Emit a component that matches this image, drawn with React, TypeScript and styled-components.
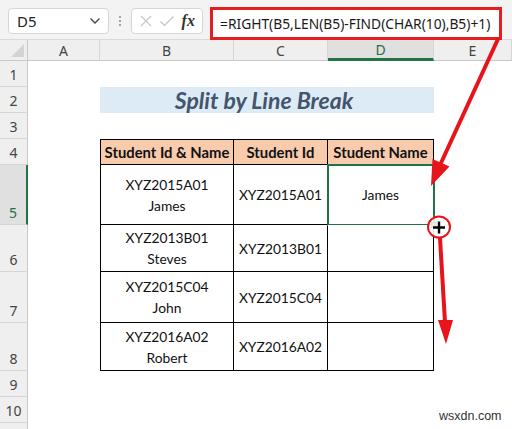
import styled, { createGlobalStyle } from 'styled-components'

const GlobalStyle = createGlobalStyle`
  html, body {
    margin: 0;
    padding: 0;
    background: #ffffff;
  }
  body {
    font-family: 'Noto Sans', 'Liberation Sans', sans-serif;
  }
`

const Page = styled.div`
  position: relative;
  width: 512px;
  height: 429px;
  overflow: hidden;
  background: #ffffff;
`

const Toolbar = styled.div`
  display: flex;
  align-items: flex-start;
  height: 40px;
  box-sizing: border-box;
  padding: 8px 0 0 8px;
  background: #f3f3f3;
  border-bottom: 1px solid #dadada;
`

const NameBox = styled.div`
  width: 101px;
  height: 26px;
  box-sizing: border-box;
  display: flex;
  align-items: center;
  justify-content: space-between;
  padding: 0 7px 0 8px;
  border: 1px solid #d6d6d6;
  border-radius: 4px;
  background: #ffffff;
  font-size: 15px;
  color: #222;
`

const Dots = styled.div`
  width: 22px;
  height: 26px;
  display: flex;
  flex-direction: column;
  align-items: center;
  justify-content: center;
  gap: 2px;
  & > span {
    width: 2px;
    height: 2px;
    border-radius: 50%;
    background: #8a8a8a;
  }
`

const FxBox = styled.div`
  width: 72px;
  height: 26px;
  box-sizing: border-box;
  display: flex;
  align-items: center;
  justify-content: space-around;
  padding: 0 4px;
  border: 1px solid #d6d6d6;
  border-radius: 4px;
  background: #ffffff;
`

const Fx = styled.span`
  font-family: 'Liberation Serif', serif;
  font-style: italic;
  font-weight: bold;
  font-size: 16px;
  color: #333;
`

const FormulaBar = styled.div`
  margin: -1px 0 0 7px;
  width: 292px;
  height: 33px;
  box-sizing: border-box;
  display: flex;
  align-items: center;
  padding-left: 7px;
  border: 3px solid #e41e1e;
  background: #ffffff;
  font-size: 13.8px;
  color: #1a1a1a;
  white-space: nowrap;
  overflow: hidden;
`

const Sheet = styled.div`
  display: grid;
  grid-template-columns: 28px 72px 134px 94px 106px 1fr;
  grid-template-rows: 21px 26px 26px 26px 26px 60px 47px 51px 48px 26px 26px 26px;
`

const Corner = styled.div`
  grid-row: 1;
  grid-column: 1;
  background: #efefef;
  border-right: 1px solid #c8c8c8;
  border-bottom: 1px solid #c8c8c8;
  position: relative;
  &::after {
    content: '';
    position: absolute;
    right: 3px;
    bottom: 3px;
    border-left: 13px solid transparent;
    border-bottom: 13px solid #d4d4d4;
  }
`

const ColHead = styled.div<{ $col: number; $active?: boolean }>`
  grid-row: 1;
  grid-column: ${(p) => p.$col};
  display: flex;
  align-items: center;
  justify-content: center;
  box-sizing: border-box;
  font-size: 14px;
  color: ${(p) => (p.$active ? '#1e7145' : '#444')};
  background: ${(p) => (p.$active ? '#e0e0e0' : '#efefef')};
  border-right: 1px solid #d6d6d6;
  border-bottom: ${(p) => (p.$active ? '3px solid #217346' : '1px solid #c8c8c8')};
`

const RowHead = styled.div<{ $row: number; $active?: boolean }>`
  grid-row: ${(p) => p.$row};
  grid-column: 1;
  display: flex;
  align-items: flex-end;
  justify-content: center;
  box-sizing: border-box;
  padding-bottom: 2px;
  font-size: 14px;
  line-height: 18px;
  color: ${(p) => (p.$active ? '#1e7145' : '#444')};
  background: ${(p) => (p.$active ? '#e0e0e0' : '#efefef')};
  border-bottom: 1px solid #d6d6d6;
  border-right: ${(p) => (p.$active ? '2px solid #217346' : '1px solid #c8c8c8')};
`

const Title = styled.div`
  grid-row: 3;
  grid-column: 3 / 6;
  display: flex;
  align-items: center;
  justify-content: center;
  padding-right: 6px;
  background: #ddebf7;
  font-family: 'Lato', 'Open Sans', sans-serif;
  font-weight: bold;
  font-style: italic;
  font-size: 23px;
  color: #44546a;
`

const Cell = styled.div<{
  $row: number
  $col: number
  $head?: boolean
  $first?: boolean
  $selected?: boolean
}>`
  grid-row: ${(p) => p.$row};
  grid-column: ${(p) => p.$col};
  display: flex;
  align-items: center;
  justify-content: center;
  box-sizing: border-box;
  text-align: center;
  white-space: pre-line;
  font-family: 'Lato', 'Open Sans', sans-serif;
  font-size: ${(p) => (p.$head ? '14.8px' : '13.8px')};
  line-height: 21px;
  font-weight: ${(p) => (p.$head ? 'bold' : 'normal')};
  color: #111;
  background: ${(p) => (p.$head ? '#f8cbad' : '#ffffff')};
  border-right: 1px solid #000;
  border-bottom: 1px solid #000;
  border-left: ${(p) => (p.$first ? '1px solid #000' : 'none')};
  border-top: ${(p) => (p.$head ? '1px solid #000' : 'none')};
  outline: ${(p) => (p.$selected ? '2px solid #217346' : 'none')};
  outline-offset: -1px;
`

const Overlay = styled.svg`
  position: absolute;
  left: 0;
  top: 0;
  width: 512px;
  height: 429px;
  pointer-events: none;
`

const Watermark = styled.div`
  position: absolute;
  left: 439px;
  top: 409px;
  font-family: 'Liberation Sans', Arial, sans-serif;
  font-size: 12.5px;
  color: #333;
`

const columns = ['A', 'B', 'C', 'D', 'E']
const rowNumbers = [1, 2, 3, 4, 5, 6, 7, 8, 9, 10]

const students = [
  { id: 'XYZ2015A01', name: 'James' },
  { id: 'XYZ2013B01', name: 'Steves' },
  { id: 'XYZ2015C04', name: 'John' },
  { id: 'XYZ2016A02', name: 'Robert' },
]

const App: React.FC = () => {
  return (
    <Page>
      <GlobalStyle />
      <Toolbar>
        <NameBox>
          D5
          <svg width='12' height='8' viewBox='0 0 12 8'>
            <path d='M1.5 1.5 L6 6 L10.5 1.5' fill='none' stroke='#444' strokeWidth='1.3' />
          </svg>
        </NameBox>
        <Dots>
          <span />
          <span />
          <span />
        </Dots>
        <FxBox>
          <svg width='14' height='14' viewBox='0 0 14 14'>
            <path d='M2 2 L12 12 M12 2 L2 12' stroke='#c4c4c4' strokeWidth='1.2' />
          </svg>
          <svg width='16' height='14' viewBox='0 0 16 14'>
            <path d='M1.5 7.5 L5.5 11.5 L14.5 2.5' fill='none' stroke='#c4c4c4' strokeWidth='1.2' />
          </svg>
          <Fx>fx</Fx>
        </FxBox>
        <FormulaBar>=RIGHT(B5,LEN(B5)-FIND(CHAR(10),B5)+1)</FormulaBar>
      </Toolbar>

      <Sheet>
        <Corner />
        {columns.map((c, i) => (
          <ColHead key={c} $col={i + 2} $active={c === 'D'}>
            {c}
          </ColHead>
        ))}
        {rowNumbers.map((n) => (
          <RowHead key={n} $row={n + 1} $active={n === 5}>
            {n}
          </RowHead>
        ))}
        <RowHead $row={12} />

        <Title>Split by Line Break</Title>

        <Cell $row={5} $col={3} $head $first>
          Student Id &amp; Name
        </Cell>
        <Cell $row={5} $col={4} $head>
          Student Id
        </Cell>
        <Cell $row={5} $col={5} $head>
          Student Name
        </Cell>

        {students.map((s, i) => (
          <Cell key={`b${s.id}`} $row={i + 6} $col={3} $first>
            {`${s.id}\n${s.name}`}
          </Cell>
        ))}
        {students.map((s, i) => (
          <Cell key={`c${s.id}`} $row={i + 6} $col={4}>
            {s.id}
          </Cell>
        ))}
        {students.map((s, i) => (
          <Cell key={`d${s.id}`} $row={i + 6} $col={5} $selected={i === 0}>
            {i === 0 ? s.name : ''}
          </Cell>
        ))}
      </Sheet>

      <Overlay viewBox='0 0 512 429'>
        <path d='M498 39 L441 163' stroke='#e8141b' strokeWidth='4' strokeLinecap='round' />
        <polygon points='431,186 449.5,166.5 432.5,159' fill='#e8141b' />
        <path d='M440 238 L445 322' stroke='#e8141b' strokeWidth='4' />
        <polygon points='438,320 453,320 446,344' fill='#e8141b' />
        <rect x='431' y='222' width='6' height='6' fill='#217346' />
        <ellipse cx='439' cy='227' rx='11' ry='10.5' fill='#ffffff' fillOpacity='0.85' stroke='#e8141b' strokeWidth='2' />
        <path d='M439 221.5 V233.5 M433 227.5 H445' stroke='#000' strokeWidth='2.4' />
      </Overlay>

      <Watermark>wsxdn.com</Watermark>
    </Page>
  )
}

export default App
